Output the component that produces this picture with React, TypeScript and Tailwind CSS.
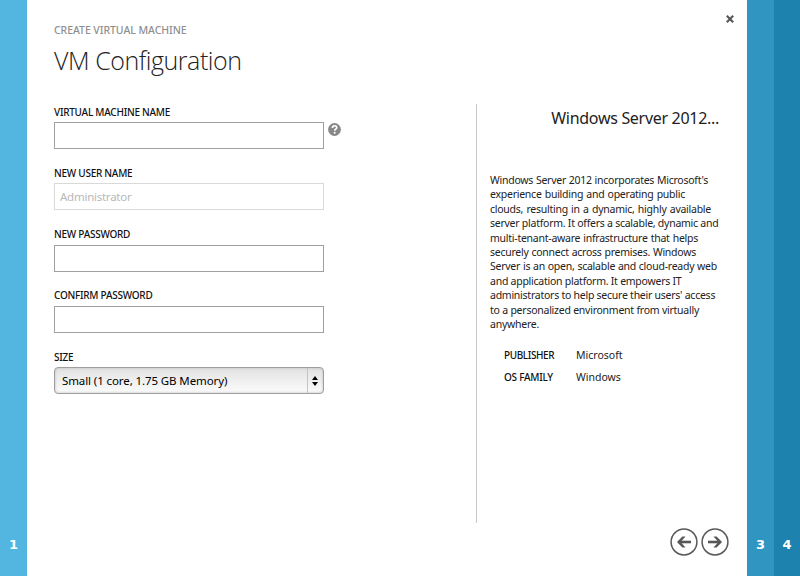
import type { ReactNode } from "react";

const description = [
  { text: "Windows Server 2012 incorporates Microsoft's", width: 218 },
  { text: "experience building and operating public", width: 195 },
  { text: "clouds, resulting in a dynamic, highly available", width: 221 },
  { text: "server platform. It offers a scalable, dynamic and", width: 228 },
  { text: "multi-tenant-aware infrastructure that helps", width: 208 },
  { text: "securely connect across premises. Windows", width: 206 },
  { text: "Server is an open, scalable and cloud-ready web", width: 227 },
  { text: "and application platform. It empowers IT", width: 191 },
  { text: "administrators to help secure their users' access", width: 224 },
  { text: "to a personalized environment from virtually", width: 209 },
  { text: "anywhere.", width: 48 },
];

function Field({ label, children }: { label: string; children: ReactNode }) {
  return (
    <div className="h-[61.25px]">
      <div className="h-[17.5px] text-[10px] leading-[15px] font-medium tracking-[-0.26px] text-[#111]">
        {label}
      </div>
      <div className="flex">{children}</div>
    </div>
  );
}

function ArrowButton({ flip }: { flip?: boolean }) {
  return (
    <button type="button" className="h-7 w-7">
      <svg
        viewBox="0 0 28 28"
        className={flip ? "h-7 w-7 -scale-x-100" : "h-7 w-7"}
        fill="none"
        stroke="#585858"
      >
        <circle cx="14" cy="14" r="12.9" strokeWidth="1.5" />
        <path d="M21 14H8.6" strokeWidth="2.6" />
        <path d="M12.4 8.6h3.1L10.6 14l4.9 5.4h-3.1L7 14z" fill="#585858" stroke="none" />
      </svg>
    </button>
  );
}

const input = "h-[27px] w-[270px] border border-[#a0a0a0] bg-white outline-none";
const step =
  "flex items-end justify-center pb-[21px] font-['DejaVu_Sans',sans-serif] text-[13px] leading-5 font-bold text-white";

export default function App() {
  return (
    <div className="flex h-[576px] w-[800px] overflow-hidden bg-white font-['Noto_Sans',sans-serif] text-[#222]">
      {/* previous step */}
      <div className={`${step} w-[27px] bg-[#52b6e1]`}>1</div>

      <main className="flex w-[720px] flex-col px-[27px]">
        <header className="flex h-[104px] justify-between">
          <div className="pt-[23px]">
            <div className="text-[10.5px] leading-[15px] font-medium tracking-[-0.06px] text-[#8f8f8f]">
              CREATE VIRTUAL MACHINE
            </div>
            <h1 className="mt-[5px] font-['Open_Sans',sans-serif] text-[25px] leading-[34px] font-light tracking-[-0.45px] text-[#222]">
              VM Configuration
            </h1>
          </div>
          <button type="button" className="-mr-[14px] mt-[15px] h-2 w-2">
            <svg viewBox="0 0 8 8" className="h-2 w-2" stroke="#555" strokeWidth="2.1">
              <path d="M.8 .8l6.4 6.4M7.2 .8L.8 7.2" />
            </svg>
          </button>
        </header>

        <div className="flex h-[419px]">
          <section className="w-[422px] pt-[0.5px]">
            <Field label="VIRTUAL MACHINE NAME">
              <input className={input} />
              <svg viewBox="0 0 13 13" className="mt-px ml-[3.5px] h-[13px] w-[13px]">
                <circle cx="6.5" cy="6.5" r="6.4" fill="#888" />
                <path
                  d="M4.4 5c0-3 4.3-2.9 4.3-.4 0 1.6-2 1.5-2 3.2"
                  fill="none"
                  stroke="white"
                  strokeWidth="1.7"
                />
                <path d="M5.7 8.9h1.9v1.7H5.7z" fill="white" />
              </svg>
            </Field>
            <Field label="NEW USER NAME">
              <input
                className="h-[27px] w-[270px] border border-[#d9d9d9] bg-white px-[5px] text-[11.5px] tracking-[-0.25px] text-[#b8b8b8]"
                defaultValue="Administrator"
                readOnly
              />
            </Field>
            <Field label="NEW PASSWORD">
              <input type="password" className={input} />
            </Field>
            <Field label="CONFIRM PASSWORD">
              <input type="password" className={input} />
            </Field>
            <Field label="SIZE">
              <div className="flex h-[27px] w-[270px] items-center rounded-[4px] border border-[#9f9f9f] bg-linear-to-b from-[#e2e2e2] to-[#fcfcfc] pl-[7px] text-[11.5px] tracking-[-0.1px] text-black shadow-[inset_0_0_3px_#bbb]">
                <span className="flex-1 whitespace-nowrap">Small (1 core, 1.75 GB Memory)</span>
                <span className="flex h-full w-4 items-center justify-center border-l border-[#c4c4c4] pr-px">
                  <svg viewBox="0 0 6 10" className="h-[10px] w-[6px]">
                    <path d="M3 0l3 4H0zM3 10L0 6h6z" />
                  </svg>
                </span>
              </div>
            </Field>
          </section>

          <aside className="flex-1 border-l border-[#c8c8c8] pl-[13px]">
            <h2 className="h-[69px] w-[229px] pt-[2px] text-right text-[16px] leading-[24px] tracking-[-0.3px] whitespace-nowrap">
              Windows Server 2012...
            </h2>
            <div className="text-[10.5px] leading-[14.4px] tracking-[-0.25px]">
              {description.map((line) => (
                <p
                  key={line.text}
                  className="whitespace-nowrap [text-align-last:justify]"
                  style={{ width: line.width }}
                >
                  {line.text}
                </p>
              ))}
            </div>
            <dl className="mt-[13px] grid grid-cols-[72px_1fr] pl-[14px] text-[10.5px] leading-[22px]">
              <dt className="text-[10px] font-medium tracking-[-0.4px] text-[#111]">PUBLISHER</dt>
              <dd>Microsoft</dd>
              <dt className="text-[10px] font-medium tracking-[-0.25px] text-[#111]">OS FAMILY</dt>
              <dd>Windows</dd>
            </dl>
          </aside>
        </div>

        <footer className="-mr-[9px] flex justify-end gap-[3.5px] pt-[5px]">
          <ArrowButton />
          <ArrowButton flip />
        </footer>
      </main>

      {/* upcoming steps */}
      <div className={`${step} w-[27px] bg-[#3095c0]`}>3</div>
      <div className={`${step} w-[26px] bg-[#1d82ae]`}>4</div>
    </div>
  );
}
